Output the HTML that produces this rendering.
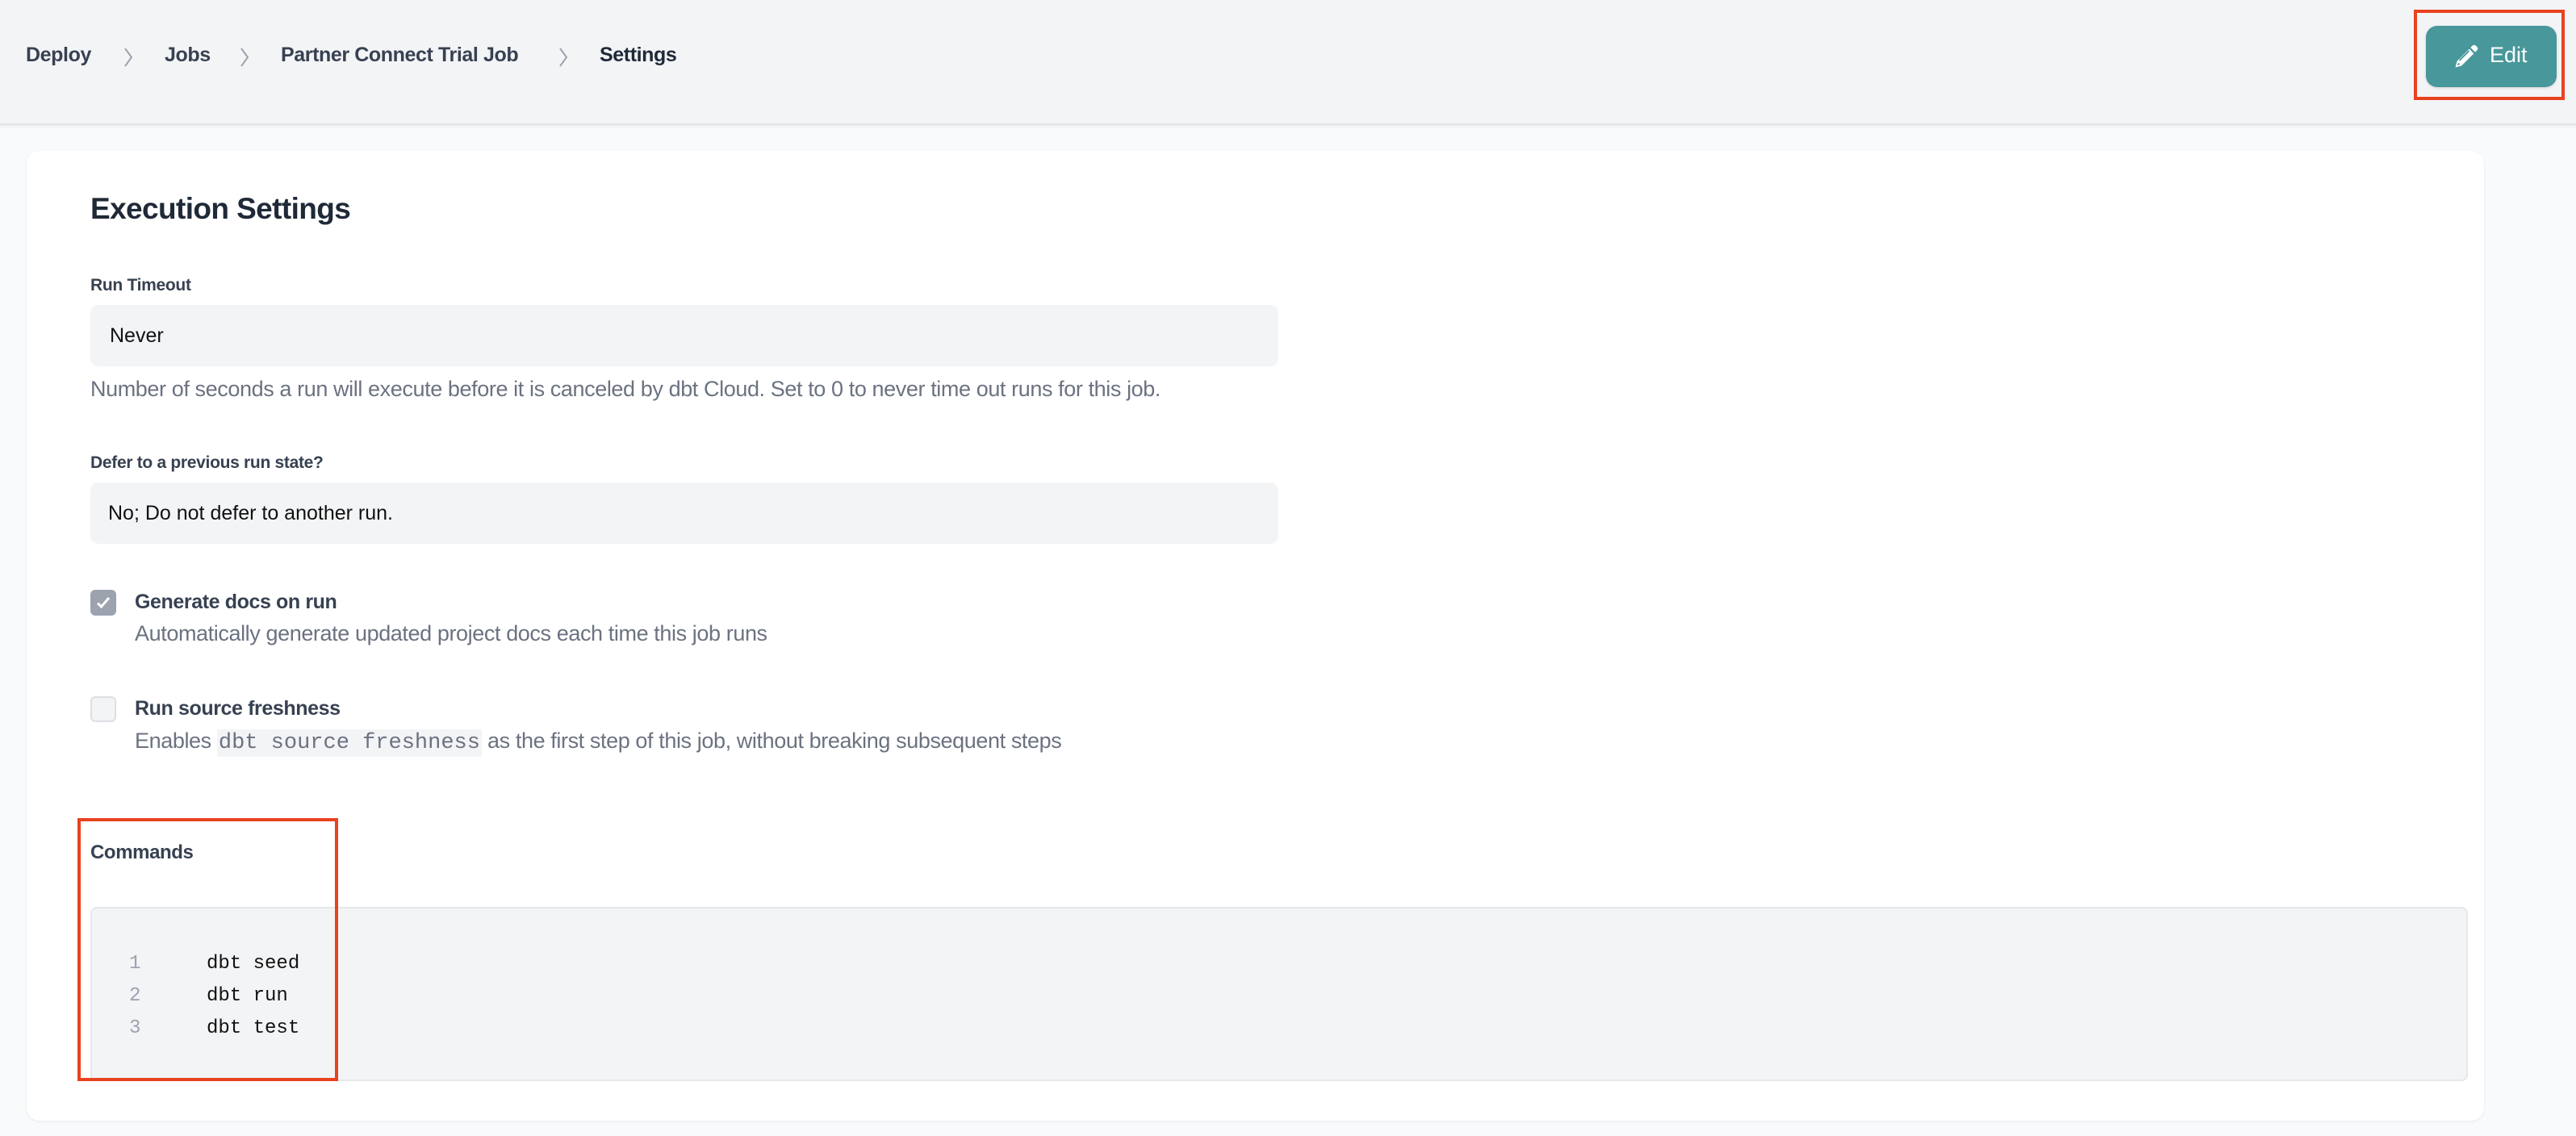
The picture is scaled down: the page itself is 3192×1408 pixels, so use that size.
<!DOCTYPE html>
<html><head><meta charset="utf-8"><style>
*{margin:0;padding:0;box-sizing:border-box}
body{width:3192px;height:1408px;background:#f9fafb;font-family:"Liberation Sans",sans-serif;color:#1f2937;position:relative;overflow:hidden}
.a{position:absolute;white-space:nowrap}
.hdr{left:0;top:0;width:3192px;height:155px;background:#f3f4f6;border-bottom:2px solid #e2e4e8;box-shadow:0 2px 4px rgba(0,0,0,.06)}
.bc{top:54px;font-size:25px;font-weight:bold;color:#374151;letter-spacing:-0.4px}
.chev{top:58px}
.card{left:33px;top:187px;width:3045px;height:1202px;background:#fff;border-radius:16px;box-shadow:0 1px 3px rgba(0,0,0,.08)}
.lbl{font-size:21px;font-weight:bold;color:#374151;letter-spacing:-0.3px}
.inp{left:112px;width:1472px;height:76px;background:#f3f4f6;border-radius:10px;font-size:25px;color:#111;padding-left:24px;line-height:76px}
.help{font-size:27px;color:#6b7280;letter-spacing:-0.4px}
.ct{font-size:25px;font-weight:bold;color:#374151;letter-spacing:-0.4px}
.cb{left:112px;width:32px;height:32px;border-radius:6px}
.mono{font-family:"Liberation Mono",monospace}
.red{border:4px solid #e8421f}
</style></head><body>
<div class="a hdr"></div>
<div class="a bc" style="left:32px">Deploy</div>
<svg class="a chev" style="left:152px" width="14" height="26" viewBox="0 0 14 26"><path d="M3 2l8 11-8 11" stroke="#9ca3af" stroke-width="2" fill="none"/></svg>
<div class="a bc" style="left:204px">Jobs</div>
<svg class="a chev" style="left:296px" width="14" height="26" viewBox="0 0 14 26"><path d="M3 2l8 11-8 11" stroke="#9ca3af" stroke-width="2" fill="none"/></svg>
<div class="a bc" style="left:348px">Partner Connect Trial Job</div>
<svg class="a chev" style="left:691px" width="14" height="26" viewBox="0 0 14 26"><path d="M3 2l8 11-8 11" stroke="#9ca3af" stroke-width="2" fill="none"/></svg>
<div class="a bc" style="left:743px;color:#1f2937">Settings</div>

<div class="a red" style="left:2991px;top:12px;width:187px;height:112px"></div>
<div class="a" style="left:3006px;top:32px;width:162px;height:76px;background:#48979a;border-radius:14px;box-shadow:0 1px 3px rgba(0,0,0,.15)">
<svg class="a" style="left:33px;top:21px" width="34" height="34" viewBox="0 0 24 24"><path d="M17.5 2.5a2 2 0 0 1 2.8 0l1.2 1.2a2 2 0 0 1 0 2.8L19.8 8.2 15.8 4.2Z M14.6 5.4l4 4L8 20 2.5 21.5 4 16Z" fill="#fff"/><path d="M6 15.5 14.5 7 M4.6 19.4 6 18" stroke="#48979a" stroke-width="1.3"/></svg>
<div class="a" style="left:79px;top:21px;font-size:27px;color:#fff">Edit</div>
</div>

<div class="a card"></div>
<div class="a" style="left:112px;top:238px;font-size:37px;font-weight:bold;color:#1f2937;letter-spacing:-0.6px">Execution Settings</div>
<div class="a lbl" style="left:112px;top:342px">Run Timeout</div>
<div class="a inp" style="top:378px">Never</div>
<div class="a help" style="left:112px;top:467px">Number of seconds a run will execute before it is canceled by dbt Cloud. Set to 0 to never time out runs for this job.</div>
<div class="a lbl" style="left:112px;top:562px">Defer to a previous run state?</div>
<div class="a inp" style="top:598px;padding-left:22px">No; Do not defer to another run.</div>

<div class="a cb" style="top:731px;background:#9ca3af"><svg width="32" height="32" viewBox="0 0 32 32"><path d="M9 16.5l4.5 4.5L23 10" stroke="#fff" stroke-width="3" fill="none"/></svg></div>
<div class="a ct" style="left:167px;top:732px">Generate docs on run</div>
<div class="a help" style="left:167px;top:770px">Automatically generate updated project docs each time this job runs</div>

<div class="a cb" style="top:863px;background:#f3f4f6;border:2px solid #dcdfe4"></div>
<div class="a ct" style="left:167px;top:864px">Run source freshness</div>
<div class="a help" style="left:167px;top:903px">Enables <span class="mono" style="background:#f3f4f6;font-size:27px;letter-spacing:0;padding:2px 2px">dbt source freshness</span> as the first step of this job, without breaking subsequent steps</div>

<div class="a ct" style="left:112px;top:1043px;font-size:24px">Commands</div>
<div class="a" style="left:112px;top:1124px;width:2946px;height:216px;background:#f3f4f6;border:2px solid #e5e7eb;border-radius:8px"></div>
<div class="a mono" style="left:160px;top:1175px;font-size:24px;line-height:40px;color:#9ca3af">1<br>2<br>3</div>
<div class="a mono" style="left:256px;top:1175px;font-size:24px;line-height:40px;color:#111">dbt seed<br>dbt run<br>dbt test</div>
<div class="a red" style="left:96px;top:1014px;width:323px;height:326px"></div>
</body></html>
